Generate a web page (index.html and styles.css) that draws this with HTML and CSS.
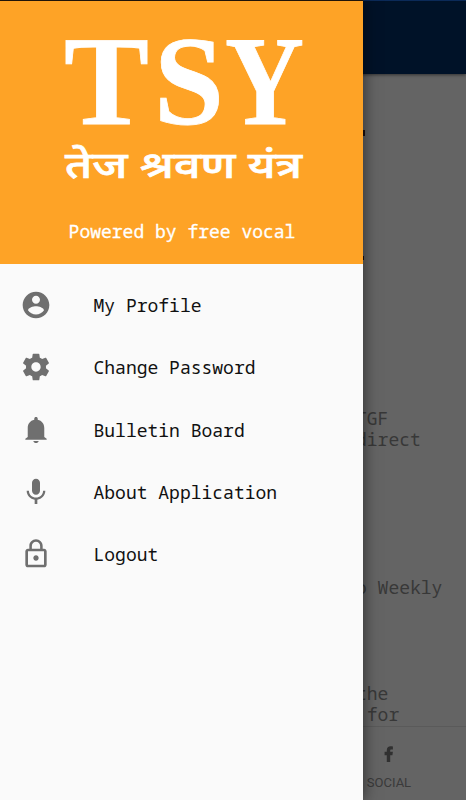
FILE: index.html
```
<!DOCTYPE html>
<html lang="en">
<head>
    <meta charset="UTF-8">
    <meta name="viewport" content="width=device-width, initial-scale=1.0">
    <title>TSY</title>
    <link rel="stylesheet" href="styles.css">
</head>
<body>
    <div class="screen">
        <!-- Dimmed page -->
        <div class="topbar"></div>
        <div class="feed">
            <div class="mark"></div>
            <div class="mark small"></div>
            <p class="post first">TGF<br>direct</p>
            <p class="post second">o Weekly</p>
            <p class="post third">the<br>&nbsp;for</p>
        </div>
        <div class="bottom-nav">
            <div class="nav-item">
                <svg class="nav-icon" viewBox="0 0 10 16"><path d="M2.8 16V9.200H.6V5.800h2.200V4.200C2.800 1.600 4.300.3 6.600.3c1 0 1.900.1 2.300.2v2.900H7.500c-1.100 0-1.300.4-1.300 1.200v1.200h2.700l-.5 3.400H6.200V16z"/></svg>
                <span>SOCIAL</span>
            </div>
        </div>

        <!-- Drawer -->
        <div class="drawer">
            <div class="drawer-header">
                <svg class="logo" viewBox="0 0 240 152">
                    <g class="logo-name">
                        <text x="0" y="88" textLength="85" lengthAdjust="spacingAndGlyphs">T</text>
                        <text x="90" y="88" textLength="70" lengthAdjust="spacingAndGlyphs">S</text>
                        <text x="161" y="88" textLength="79" lengthAdjust="spacingAndGlyphs">Y</text>
                    </g>
                    <text class="logo-sub" x="1" y="142" textLength="237" lengthAdjust="spacingAndGlyphs">तेज श्रवण यंत्र</text>
                </svg>
                <p class="tagline">Powered by free vocal</p>
            </div>
            <ul class="menu">
                <li>
                    <svg viewBox="0 0 24 24"><path d="M12 2C6.48 2 2 6.48 2 12s4.48 10 10 10 10-4.48 10-10S17.52 2 12 2zm0 3c1.66 0 3 1.34 3 3s-1.34 3-3 3-3-1.34-3-3 1.34-3 3-3zm0 14.2c-2.5 0-4.71-1.28-6-3.22.03-1.99 4-3.08 6-3.08 1.99 0 5.97 1.09 6 3.08-1.29 1.94-3.5 3.22-6 3.22z"/></svg>
                    <span>My Profile</span>
                </li>
                <li>
                    <svg viewBox="0 0 24 24"><path d="M19.43 12.98c.04-.32.07-.64.07-.98s-.03-.66-.07-.98l2.11-1.65c.19-.15.24-.42.12-.64l-2-3.46c-.12-.22-.39-.3-.61-.22l-2.49 1c-.52-.4-1.08-.73-1.69-.98l-.38-2.65C14.46 2.18 14.25 2 14 2h-4c-.25 0-.46.18-.49.42l-.38 2.65c-.61.25-1.17.59-1.69.98l-2.49-1c-.23-.09-.49 0-.61.22l-2 3.46c-.13.22-.07.49.12.64l2.11 1.65c-.04.32-.07.65-.07.98s.03.66.07.98l-2.11 1.65c-.19.15-.24.42-.12.64l2 3.46c.12.22.39.3.61.22l2.49-1c.52.4 1.08.73 1.69.98l.38 2.65c.03.24.24.42.49.42h4c.25 0 .46-.18.49-.42l.38-2.65c.61-.25 1.17-.59 1.69-.98l2.49 1c.23.09.49 0 .61-.22l2-3.46c.12-.22.07-.49-.12-.64l-2.11-1.65zM12 15.5c-1.93 0-3.5-1.57-3.5-3.5s1.57-3.5 3.5-3.5 3.5 1.57 3.5 3.5-1.57 3.5-3.5 3.5z"/></svg>
                    <span>Change Password</span>
                </li>
                <li>
                    <svg viewBox="0 0 24 24"><path d="M10 20.200h4c-.3 1-1 1.600-2 1.600s-1.700-.6-2-1.600zM18.200 17.200v-6.700c0-3-1.800-5.400-4.900-6.100v-.8c0-.8-.5-1.300-1.300-1.300s-1.300.5-1.300 1.300v.8c-3.100.7-4.900 3.100-4.900 6.100v6.700l-1.800 1.300v.9h16v-.9z"/></svg>
                    <span>Bulletin Board</span>
                </li>
                <li>
                    <svg viewBox="0 0 24 24"><path d="M12 14c1.66 0 2.99-1.34 2.99-3L15 5c0-1.66-1.34-3-3-3S9 3.34 9 5v6c0 1.66 1.34 3 3 3zm5.3-3c0 3-2.54 5.1-5.3 5.1S6.7 14 6.7 11H5c0 3.41 2.72 6.23 6 6.72V21h2v-3.28c3.28-.48 6-3.3 6-6.72h-1.7z"/></svg>
                    <span>About Application</span>
                </li>
                <li>
                    <svg viewBox="0 0 24 24"><path d="M12 17c1.1 0 2-.9 2-2s-.9-2-2-2-2 .9-2 2 .9 2 2 2zm6-9h-1V6c0-2.76-2.24-5-5-5S7 3.24 7 6v2H6c-1.1 0-2 .9-2 2v10c0 1.1.9 2 2 2h12c1.1 0 2-.9 2-2V10c0-1.1-.9-2-2-2zM8.9 6c0-1.71 1.39-3.1 3.1-3.1s3.1 1.39 3.1 3.1v2H8.9V6zM18 20H6V10h12v10z"/></svg>
                    <span>Logout</span>
                </li>
            </ul>
        </div>
    </div>
</body>
</html>
```
FILE: styles.css
```
* {
    margin: 0;
    padding: 0;
    box-sizing: border-box;
}
body {
    font-family: "Droid Sans Mono", "Noto Sans Mono", "DejaVu Sans Mono", monospace;
    font-size: 18px;
    background: #646464;
}
.screen {
    position: relative;
    display: flex;
    flex-direction: column;
    width: 466px;
    height: 800px;
    overflow: hidden;
    background: #646464;
}
.topbar {
    height: 74px;
    flex: none;
    background: #001228;
    border-top: 1px solid #0b2a58;
    box-shadow: 0 1px 3px rgba(0, 0, 0, 0.5);
}
.feed {
    flex: 1;
    padding: 56px 0 0 356px;
    color: #383838;
}
.mark {
    width: 9px;
    height: 6px;
    background: #1c1010;
}
.mark.small {
    width: 8px;
    height: 4px;
    margin-top: 120px;
}
.post {
    line-height: 21px;
    white-space: nowrap;
}
.post.first {
    margin-top: 148px;
}
.post.second {
    margin-top: 127px;
}
.post.third {
    margin-top: 85px;
}
.bottom-nav {
    height: 74px;
    flex: none;
    display: flex;
    justify-content: flex-end;
    border-top: 1px solid #5a5a5a;
    font-family: Roboto, sans-serif;
    font-size: 13px;
    color: #3a3a3a;
}
.nav-item {
    width: 154px;
    padding-top: 19px;
    display: flex;
    flex-direction: column;
    align-items: center;
    gap: 13px;
}
.nav-icon {
    width: 10px;
    height: 16px;
    fill: #303030;
}
.drawer {
    position: absolute;
    top: 0;
    left: 0;
    width: 363px;
    height: 800px;
    background: #fafafa;
    border-top: 1px solid #201408;
    box-shadow: 1px 0 14px rgba(0, 0, 0, 0.5);
}
.drawer-header {
    height: 262.5px;
    padding-top: 35px;
    background: #fea326;
    color: #fff;
    display: flex;
    flex-direction: column;
    align-items: center;
}
.logo {
    width: 240px;
    height: 152px;
    margin-left: 5px;
    fill: #fff;
    overflow: visible;
}
.logo-name {
    font-family: "Liberation Serif", serif;
    font-weight: bold;
    font-size: 127px;
    stroke: #fff;
    stroke-width: 0.8px;
}
.logo-sub {
    font-family: "Noto Sans Devanagari", "Noto Sans", sans-serif;
    font-weight: 500;
    font-size: 37px;
    stroke: #fff;
    stroke-width: 0.7px;
}
.tagline {
    margin: 32px 0 0 1px;
    line-height: 22px;
    -webkit-text-stroke: 0.3px #fff;
}
.menu {
    list-style: none;
    padding-top: 10.5px;
    color: #111;
}
.menu li {
    height: 62.3px;
    padding-left: 20px;
    display: flex;
    align-items: center;
    gap: 41.5px;
}
.menu svg {
    width: 32px;
    height: 32px;
    fill: #6f6f6f;
}
```
